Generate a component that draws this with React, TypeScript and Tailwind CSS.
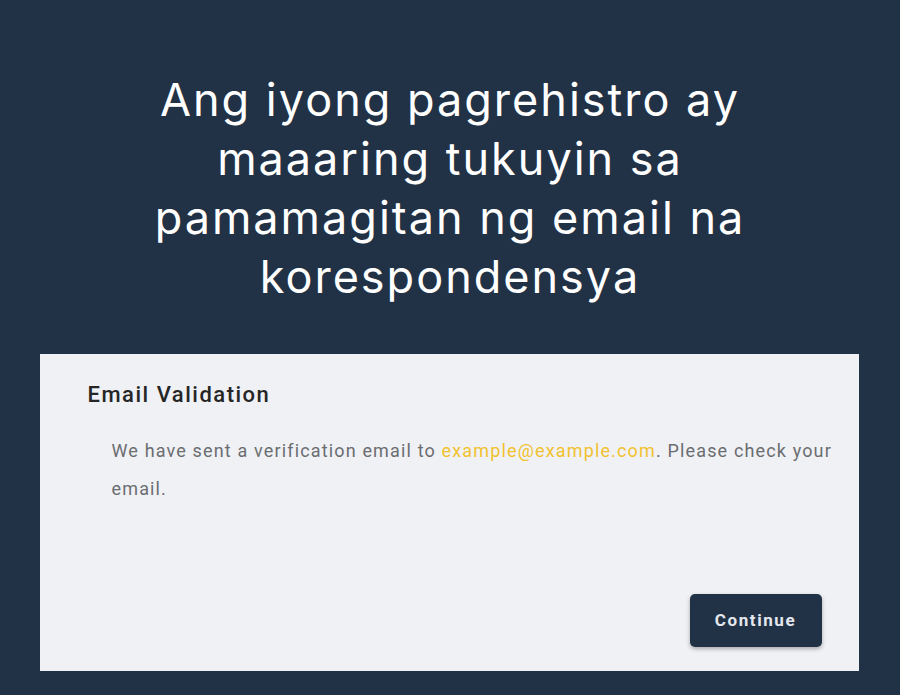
export default function App() {
  return (
    <div className="min-h-[695px] w-[900px] bg-[#223246] flex flex-col items-center">
      <h1
        className="mt-[70px] w-[660px] text-center text-white text-[45px] leading-[59px] font-normal tracking-[2px]"
        style={{ fontFamily: 'Inter, "Noto Sans", sans-serif' }}
      >
        Ang iyong pagrehistro ay maaaring tukuyin sa pamamagitan ng email na korespondensya
      </h1>

      <div
        className="mt-[48px] ml-[-2px] w-[819px] h-[317px] bg-[#eff1f5] flex flex-col pl-[48px] pr-[10px] pt-[26px] pb-[24px]"
        style={{ fontFamily: 'Roboto, "Liberation Sans", sans-serif' }}
      >
        <h2 className="text-[22px] font-medium text-[#262626] leading-[30px] tracking-[1.5px]">Email Validation</h2>
        <p className="mt-[22px] ml-[24px] text-[18px] leading-[38px] text-[#6b6d70] tracking-[1.15px]">
          We have sent a verification email to{' '}
          <span className="text-[#f2c12e]">example@example.com</span>. Please check your email.
        </p>
        <div className="mt-auto flex justify-end pr-[27px]">
          <button className="w-[132px] h-[53px] rounded-[5px] bg-[#223246] text-[#e4e8ee] text-[17px] font-bold tracking-[1.6px] shadow-[0_2px_4px_rgba(0,0,0,0.3)]">
            Continue
          </button>
        </div>
      </div>
    </div>
  )
}
